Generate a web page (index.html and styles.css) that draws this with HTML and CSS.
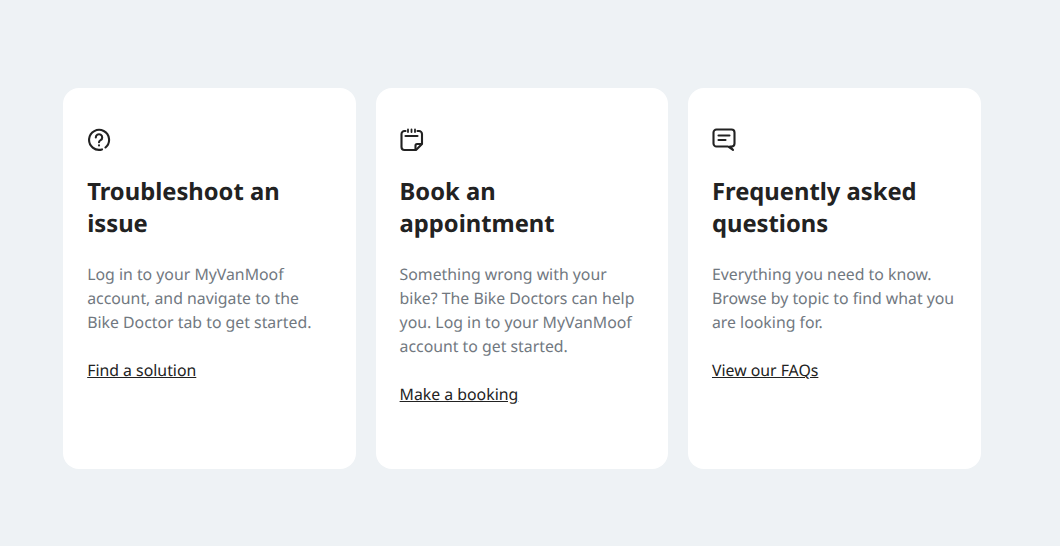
FILE: index.html
```html
<!DOCTYPE html>
<html lang="en">
<head>
<meta charset="utf-8">
<title>Support</title>
<link rel="stylesheet" href="styles.css">
</head>
<body>
<main class="cards">
  <section class="card">
    <svg class="icon" viewBox="0 0 24 24" fill="none" stroke="#222" stroke-width="2.100" stroke-linecap="round" stroke-linejoin="round"><path d="M15 21.400A10 10 0 1 1 18.500 19.500"/><path d="M8.800 9.400a3.200 3.200 0 1 1 4.800 2.800c-1 .6-1.600 1.100-1.600 2.100"/><path d="M12 17.400v.1"/></svg>
    <h2>Troubleshoot an issue</h2>
    <p>Log in to your MyVanMoof account, and navigate to the Bike Doctor tab to get started.</p>
    <a href="#">Find a solution</a>
  </section>
  <section class="card">
    <svg class="icon" viewBox="0 0 24 24" fill="none" stroke="#222" stroke-width="2.100" stroke-linecap="round" stroke-linejoin="round"><path d="M5.500 3H4.500A3 3 0 0 0 1.500 6V19a3 3 0 0 0 3 3H16l6-6V6a3 3 0 0 0-3-3h-1.500"/><path d="M8 1.500v2.500M11.500 1.500v2.500M15 1.500v2.500" stroke-width="1.800"/><path d="M5.500 8h12"/><path d="M15.500 21v-3.500a1.500 1.500 0 0 1 1.500-1.500h4"/></svg>
    <h2>Book an appointment</h2>
    <p>Something wrong with your bike? The Bike Doctors can help you. Log in to your MyVanMoof account to get started.</p>
    <a href="#">Make a booking</a>
  </section>
  <section class="card">
    <svg class="icon" viewBox="0 0 24 24" fill="none" stroke="#222" stroke-width="2.100" stroke-linecap="round" stroke-linejoin="round"><path d="M4.500 1.500h15a3 3 0 0 1 3 3v11a3 3 0 0 1-3 3H18l3 3.500-5-3.500H4.500a3 3 0 0 1-3-3v-11a3 3 0 0 1 3-3z"/><path d="M6.500 7.500h11M6.500 12h7"/></svg>
    <h2>Frequently asked questions</h2>
    <p>Everything you need to know. Browse by topic to find what you are looking for.</p>
    <a href="#">View our FAQs</a>
  </section>
</main>
</body>
</html>
```

FILE: styles.css
```css
html, body {
  margin: 0;
  height: 100%;
}

body {
  background: #eef2f5;
  font-family: "Noto Sans", sans-serif;
  text-rendering: geometricPrecision;
  overflow: hidden;
}

.cards {
  display: grid;
  grid-template-columns: repeat(3, 292.800px);
  column-gap: 19.600px;
  padding: 88px 0 0 63.200px;
}

.card {
  box-sizing: border-box;
  height: 381px;
  padding: 40px 24px 0;
  background: #fff;
  border-radius: 16px;
}

.icon {
  display: block;
  width: 24px;
  height: 24px;
}

h2 {
  margin: 23px 0 0;
  font-size: 23.760px;
  line-height: 32px;
  font-weight: 700;
  color: #222;
}

p {
  margin: 23px 0 0;
  font-size: 15.840px;
  line-height: 24px;
  color: #71787f;
}

a {
  display: inline-block;
  margin-top: 24px;
  font-size: 15.840px;
  line-height: 24px;
  color: #222;
  text-decoration: underline;
}
```
